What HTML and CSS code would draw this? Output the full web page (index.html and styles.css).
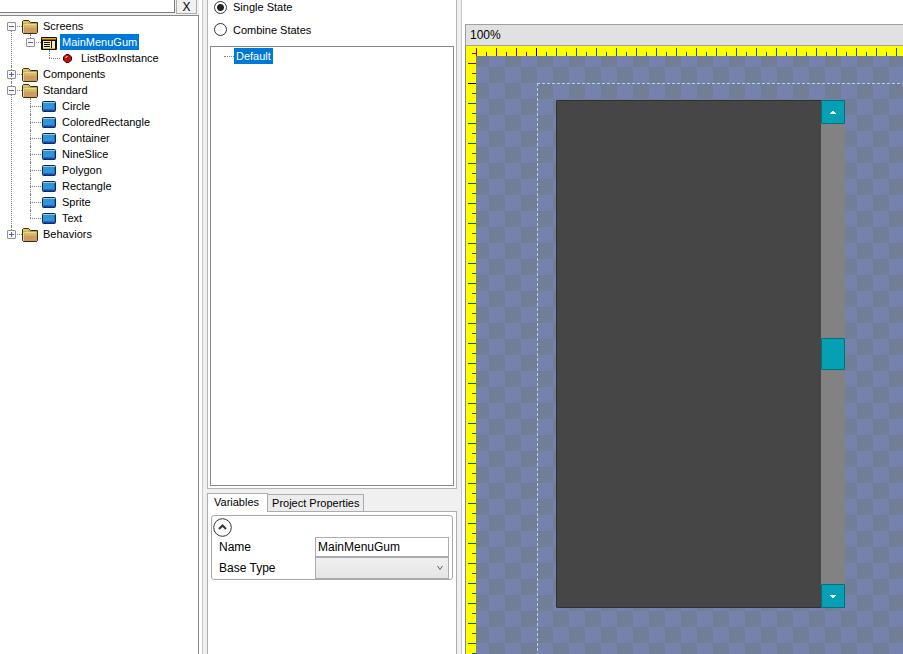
FILE: index.html
```html
<!DOCTYPE html>
<html lang="en">
<head>
<meta charset="utf-8">
<title>Gum</title>
<link rel="stylesheet" href="styles.css">
</head>
<body>
<svg class="defs" aria-hidden="true">
  <defs>
    <symbol id="folder" viewBox="0 0 16 14">
      <path d="M.5 1.5 1.5.5h5l2 2h7v10l-1 1H1.500l-1-1z" fill="#c4984f" stroke="#3f2d16"/>
      <path d="M1 1h5l2 2.500H1z" fill="#d2c96a"/>
      <path d="M2.500 4.500h12v4h-12z" fill="#cdc363"/>
      <path d="M2.500 7.500h12v5h-12z" fill="#d09a62"/>
      <path d="M1.500 12.500v-8h13" fill="none" stroke="#ecd79a"/>
    </symbol>
    <symbol id="block" viewBox="0 0 14 11">
      <rect x=".5" y=".5" width="13" height="10" rx="1" fill="#3394d4" stroke="#06304c"/>
      <path d="M1 1.500h12" stroke="#82cbf2"/>
      <path d="M1.500 8.500h11v-6" fill="none" stroke="#2a65cf"/>
      <path d="M1 9.500h12" stroke="#1d45b4"/>
    </symbol>
    <symbol id="screen" viewBox="0 0 16 13">
      <rect width="16" height="13" rx="1" fill="#171206"/>
      <path d="M1 1.500h14" stroke="#e0a83c"/>
      <path d="M1 2.500h14" stroke="#8a6420"/>
      <rect x="2" y="4" width="12" height="8" fill="#f3edb6"/>
      <path d="M3 5.500h6M3 7.500h6M3 9.500h6M10.500 4v7" stroke="#171206"/>
      <path d="M2 11.500h12" stroke="#bfae68"/>
    </symbol>
    <symbol id="instance" viewBox="0 0 9 9">
      <path d="M3 .5h3L8.500 3v3L6 8.500H3L.5 6V3z" fill="#c40b0b" stroke="#3d0000"/>
      <path d="M2 3.500h2M3 2.500h2" stroke="#ff8c80"/>
    </symbol>
  </defs>
</svg>
<main class="app">
  <section class="explorer">
    <div class="search">
      <input class="search-box" type="text" aria-label="Search">
      <button class="clear" type="button">X</button>
    </div>
    <ul class="tree">
      <li><div class="row"><button class="toggle" aria-label="Collapse"></button><svg class="folder"><use href="#folder"/></svg><span>Screens</span></div>
        <ul>
          <li><div class="row"><button class="toggle" aria-label="Collapse"></button><svg class="screen"><use href="#screen"/></svg><span class="selected">MainMenuGum</span></div>
            <ul><li><div class="row"><svg class="instance"><use href="#instance"/></svg><span>ListBoxInstance</span></div></li></ul>
          </li>
        </ul>
      </li>
      <li><div class="row"><button class="toggle plus" aria-label="Expand"></button><svg class="folder"><use href="#folder"/></svg><span>Components</span></div></li>
      <li><div class="row"><button class="toggle" aria-label="Collapse"></button><svg class="folder"><use href="#folder"/></svg><span>Standard</span></div>
        <ul>
          <li><div class="row"><svg class="block"><use href="#block"/></svg><span>Circle</span></div></li>
          <li><div class="row"><svg class="block"><use href="#block"/></svg><span>ColoredRectangle</span></div></li>
          <li><div class="row"><svg class="block"><use href="#block"/></svg><span>Container</span></div></li>
          <li><div class="row"><svg class="block"><use href="#block"/></svg><span>NineSlice</span></div></li>
          <li><div class="row"><svg class="block"><use href="#block"/></svg><span>Polygon</span></div></li>
          <li><div class="row"><svg class="block"><use href="#block"/></svg><span>Rectangle</span></div></li>
          <li><div class="row"><svg class="block"><use href="#block"/></svg><span>Sprite</span></div></li>
          <li><div class="row"><svg class="block"><use href="#block"/></svg><span>Text</span></div></li>
        </ul>
      </li>
      <li><div class="row"><button class="toggle plus" aria-label="Expand"></button><svg class="folder"><use href="#folder"/></svg><span>Behaviors</span></div></li>
    </ul>
  </section>

  <section class="middle">
    <div class="states">
      <label class="mode"><input type="radio" name="mode" checked>Single State</label>
      <label class="mode"><input type="radio" name="mode">Combine States</label>
      <div class="state-list"><span class="selected">Default</span></div>
    </div>
    <div class="details">
      <div class="tabs">
        <button class="tab active" type="button">Variables</button>
        <button class="tab" type="button">Project Properties</button>
      </div>
      <div class="page">
        <div class="group">
          <button class="collapse" type="button" aria-label="Collapse group"><svg viewBox="0 0 19 19"><circle cx="9.500" cy="9.500" r="8.800"/><path d="m6 11 3.500-3.500L13 11"/></svg></button>
          <div class="field"><label for="name">Name</label><input id="name" type="text" value="MainMenuGum"></div>
          <div class="field">
            <label for="base">Base Type</label>
            <div class="select">
              <select id="base"><option></option></select>
              <svg viewBox="0 0 6 6"><path d="m.5 1 2.500 3.500L5.500 1"/></svg>
            </div>
          </div>
        </div>
      </div>
    </div>
  </section>

  <section class="editor">
    <div class="zoom-bar">100%</div>
    <div class="ruler-top"></div>
    <div class="workspace">
      <div class="ruler-left"></div>
      <div class="canvas">
        <div class="bounds"></div>
        <div class="listbox">
          <div class="scrollbar">
            <div class="arrow"><svg viewBox="0 0 6 3"><path d="M2 0h2v1h1v1h1v1H0V2h1V1h1z"/></svg></div>
            <div class="thumb"></div>
            <div class="arrow"><svg viewBox="0 0 6 3"><path d="M0 0h6v1H5v1H4v1H2V2H1V1H0z"/></svg></div>
          </div>
        </div>
      </div>
    </div>
  </section>
</main>
</body>
</html>
```
FILE: styles.css
```css
* { box-sizing: border-box; }
body {
  margin: 0;
  background: #f0f0f0;
  color: #000;
  font: 11px/16px "Liberation Sans", Arial, sans-serif;
}
button, input, select { font: inherit; color: inherit; margin: 0; }
ul { list-style: none; margin: 0; padding: 0; }
.defs { position: absolute; width: 0; height: 0; }
.app {
  display: grid;
  grid-template-columns: 203px 250px 1fr;
  column-gap: 4px;
  height: 100vh;
  overflow: hidden;
}
.selected { background: #0078d7; color: #fff; }

/* Project tree */
.explorer {
  display: flex;
  flex-direction: column;
  padding-right: 3px;
  border-right: 1px solid #c8c8c8;
  background: #fff;
}
.search { display: flex; gap: 1px; height: 15px; padding-right: 2px; background: #f0f0f0; }
.search-box {
  flex: 1;
  min-width: 0;
  height: 13px;
  padding: 0;
  border: 1px solid #7a7a7a;
  border-width: 0 1px 1px 0;
  background: #fff;
}
.clear {
  width: 21px;
  height: 14px;
  padding: 0;
  border: 1px solid #adadad;
  border-top: 0;
  background: #f0f0f0;
  font-size: 12px;
  line-height: 8px;
}
.tree {
  flex: 1;
  padding: 2px 0 0 7px;
  border: 1px solid #828790;
  border-width: 1px 1px 0 0;
}
.tree li { position: relative; }
.tree ul { padding-left: 19px; }
.row { display: flex; align-items: center; height: 16px; }
.row svg { flex: none; }
.row span { padding: 0 2px; white-space: nowrap; }
.folder { width: 16px; height: 14px; margin: 2px 3px 0 6px; }
.screen { width: 16px; height: 13px; margin: 2px 3px 0 6px; }
.block { width: 14px; height: 11px; margin: 0 4px 0 16px; }
.instance { width: 9px; height: 9px; margin: 0 7px 0 18px; }
.toggle {
  position: relative;
  z-index: 1;
  flex: none;
  width: 9px;
  height: 9px;
  padding: 0;
  border: 1px solid #919191;
  border-radius: 1px;
  background: linear-gradient(#4b63a7, #4b63a7) center / 5px 1px no-repeat, #f8f8f8;
}
.plus {
  background: linear-gradient(#4b63a7, #4b63a7) center / 5px 1px no-repeat,
    linear-gradient(#4b63a7, #4b63a7) center / 1px 5px no-repeat, #f8f8f8;
}
.tree li::before {
  content: "";
  position: absolute;
  left: 4px;
  top: 8px;
  width: 11px;
  border-top: 1px dotted #808080;
}
.tree li::after {
  content: "";
  position: absolute;
  left: 4px;
  top: 0;
  height: 100%;
  border-left: 1px dotted #808080;
}
.tree li:last-child::after { height: 8px; }
.tree > li:first-child::after { top: 8px; height: calc(100% - 8px); }

/* States and variables */
.middle { display: flex; flex-direction: column; }
.states {
  display: flex;
  flex-direction: column;
  height: 489px;
  padding: 0 2px 2px;
  border: 1px solid #b4b4b4;
  border-top: 0;
  background: #fff;
}
.mode { display: flex; align-items: center; gap: 6px; height: 23px; padding-left: 4px; }
.mode:first-child { height: 18px; padding-bottom: 4px; }
.mode input {
  appearance: none;
  width: 13px;
  height: 13px;
  border: 1px solid #333;
  border-radius: 50%;
  background: #fff;
}
.mode input:checked { background: radial-gradient(circle, #222 0 3px, #fff 4px); }
.state-list {
  position: relative;
  flex: 1;
  margin-top: 5px;
  padding: 1px 0 0 23px;
  border: 1px solid #828790;
}
.state-list span { display: inline-block; padding: 0 2px; }
.state-list::before {
  content: "";
  position: absolute;
  left: 13px;
  top: 9px;
  width: 10px;
  border-top: 1px dotted #808080;
}
.details { display: flex; flex: 1; flex-direction: column; padding-top: 4px; }
.tabs { display: flex; align-items: flex-end; }
.tab {
  height: 17px;
  padding: 0 4px;
  border: 1px solid #acacac;
  border-left: 0;
  border-bottom: 0;
  background: #ececec;
  line-height: 15px;
}
.active {
  position: relative;
  height: 19px;
  margin-bottom: -1px;
  padding: 0 8px 1px 6px;
  border-left: 1px solid #acacac;
  background: #fff;
}
.page { flex: 1; padding: 3px; border: 1px solid #acacac; border-bottom: 0; background: #fff; }
.group { padding: 1px 3px 0 1px; border: 1px solid #a8a8a8; border-radius: 3px; font-size: 12px; }
.collapse { display: block; width: 19px; height: 20px; padding: 0; border: 0; background: none; }
.collapse svg { display: block; width: 19px; height: 19px; fill: none; stroke: #333; }
.collapse path { stroke-width: 2; }
.field { display: grid; grid-template-columns: 96px 1fr; align-items: center; padding-left: 6px; }
.field input { width: 100%; height: 20px; padding: 0 2px; border: 1px solid #abadb3; background: #fff; }
.select { display: grid; align-items: center; }
.select > * { grid-area: 1 / 1; }
.select svg {
  justify-self: end;
  width: 6px;
  height: 6px;
  margin-right: 6px;
  fill: none;
  stroke: #606060;
  pointer-events: none;
}
.field select {
  appearance: none;
  width: 100%;
  height: 22px;
  border: 1px solid #acacac;
  border-radius: 0;
  background: linear-gradient(#f0f0f0, #e5e5e5);
}

/* Editor */
.editor {
  display: flex;
  flex-direction: column;
  min-width: 0;
  padding: 24px 0 0 3px;
  border-left: 1px solid #c8c8c8;
  background: #fff;
}
.zoom-bar {
  height: 22px;
  padding: 2px 4px;
  border: 1px solid #a0a0a0;
  border-right: 0;
  background: #e1e1e1;
  font-size: 12px;
}
.ruler-top, .workspace { border-left: 1px solid #828790; }
.ruler-top { position: relative; height: 10px; background: #ff0; }
.ruler-top::after {
  content: "";
  position: absolute;
  inset: 0 0 0 10px;
  background: linear-gradient(90deg, #900000 60px, #000 60px 61px, #006400 61px);
  mask:
    repeating-linear-gradient(90deg, #000 0 1px, transparent 1px 20px) bottom / 100% 8px no-repeat,
    repeating-linear-gradient(90deg, #000 0 1px, transparent 1px 10px) bottom / 100% 4px no-repeat;
}
.workspace { display: flex; flex: 1; }
.ruler-left { position: relative; width: 10px; background: #ff0; }
.ruler-left::after {
  content: "";
  position: absolute;
  inset: -3px 0 0;
  background: linear-gradient(#900000 30px, #000 30px 31px, #006400 31px);
  mask:
    repeating-linear-gradient(transparent 0 10px, #000 10px 11px, transparent 11px 20px) right / 8px 100% no-repeat,
    repeating-linear-gradient(#000 0 1px, transparent 1px 10px) right / 4px 100% no-repeat;
}
.canvas {
  position: relative;
  flex: 1;
  overflow: hidden;
  background: repeating-conic-gradient(#7582ad 0 25%, #727e95 0 50%) 13px 11px / 32px 32px;
}
.bounds {
  position: absolute;
  inset: 27px 0 0 61px;
  background:
    repeating-linear-gradient(90deg, #add8e6 0 3px, transparent 3px 5px) top / 100% 1px no-repeat,
    repeating-linear-gradient(#add8e6 0 3px, transparent 3px 5px) left / 1px 100% no-repeat;
}
.listbox {
  position: absolute;
  left: 80px;
  top: 44px;
  display: flex;
  justify-content: flex-end;
  width: 289px;
  height: 508px;
  border-radius: 2px;
  background: #464646;
  box-shadow: inset 0 0 0 1px #303030;
}
.scrollbar {
  display: flex;
  flex-direction: column;
  justify-content: space-between;
  width: 24px;
  border-radius: 0 2px 2px 0;
  background: #828282;
}
.arrow, .thumb { border: 1px solid #04707e; border-radius: 1px; background: #06a0b4; }
.arrow { display: grid; place-items: center; height: 24px; }
.arrow svg { width: 6px; height: 3px; fill: #fff; }
.thumb { height: 32px; }
```
